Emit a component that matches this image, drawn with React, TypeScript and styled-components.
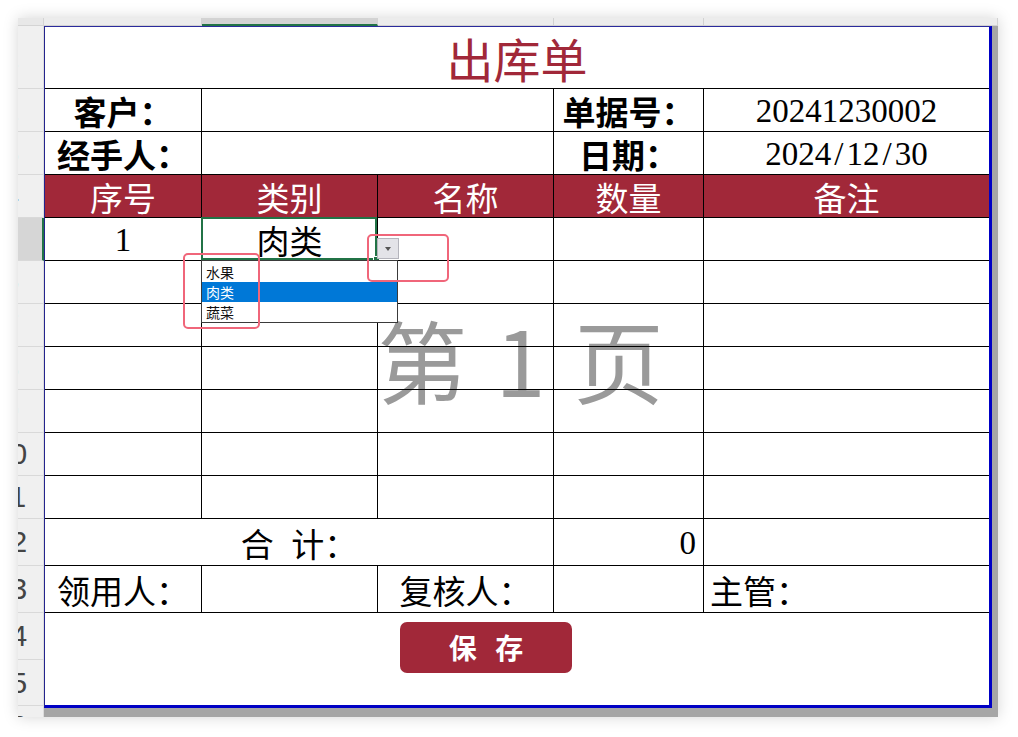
import React from "react";
import styled, { createGlobalStyle } from "styled-components";

const RED = "#a12839";
const CJK = `"Noto Sans CJK SC", sans-serif`;
const SERIF = `"Liberation Serif", "Noto Sans CJK SC", serif`;

const GlobalStyle = createGlobalStyle`
  html, body { margin: 0; padding: 0; background: #ffffff; }
  body { width: 1018px; height: 737px; overflow: hidden; font-family: ${CJK}; }
`;

const Stage = styled.div`
  padding: 18px 0 0 18px;
`;

const Window = styled.div`
  width: 980px;
  height: 699px;
  display: grid;
  grid-template-columns: 26px 954px;
  grid-template-rows: 8px 691px;
  background: #f0f0f0;
  box-shadow: 0 0 14px rgba(0, 0, 0, 0.17);
  overflow: hidden;
`;

const Corner = styled.div`
  box-sizing: border-box;
  background: #e8e8e8;
  border-right: 1px solid #d4d4d4;
  border-bottom: 1px solid #d4d4d4;
`;

const ColHeaders = styled.div`
  display: grid;
  grid-template-columns: 158px 176px 176px 150px 1fr;
`;

const ColHead = styled.div<{ $active?: boolean }>`
  box-sizing: border-box;
  border-right: 1px solid #d2d2d2;
  border-bottom: ${(p) => (p.$active ? "2px solid #217346" : "1px solid #d2d2d2")};
  background: ${(p) => (p.$active ? "#d3d3d3" : "#ececec")};
`;

const RowHeaders = styled.div`
  display: flex;
  flex-direction: column;
  overflow: hidden;
  background: #f0f0f0;
`;

const RowHead = styled.div<{ $h: number; $active?: boolean }>`
  flex: none;
  box-sizing: border-box;
  width: 66px;
  margin-left: -40px;
  height: ${(p) => p.$h}px;
  display: flex;
  align-items: center;
  justify-content: center;
  font-family: "Liberation Sans", sans-serif;
  font-size: 30px;
  line-height: 1;
  color: #444;
  background: ${(p) => (p.$active ? "#d6d6d6" : "#f0f0f0")};
  border-bottom: 1px solid #d9d9d9;
  border-right: ${(p) => (p.$active ? "2px solid #217346" : "1px solid #dcdcdc")};
`;

const SheetArea = styled.div`
  background: #a6a6a6;
`;

const Page = styled.div`
  position: relative;
  box-sizing: border-box;
  width: 948px;
  height: 682px;
  background: #ffffff;
  border-left: 1px solid #24248e;
  border-top: 1px solid #2b2b9c;
  border-right: 3px solid #0000c4;
  border-bottom: 3px solid #0000c4;
`;

const Watermark = styled.div`
  position: absolute;
  z-index: 0;
  left: 0;
  right: 0;
  top: 286px;
  padding-left: 7px;
  text-align: center;
  font-family: ${CJK};
  font-size: 90px;
  line-height: 90px;
  word-spacing: 8px;
  color: #9a9a9a;
  pointer-events: none;
`;

const Sheet = styled.div`
  position: relative;
  z-index: 1;
  display: grid;
  grid-template-columns: 157px 176px 176px 150px 285px;
  grid-template-rows: 62px repeat(10, 43px) 47px 47px 92px;
`;

type CellProps = {
  $span?: number;
  $last?: boolean;
  $noBottom?: boolean;
  $align?: "left" | "center" | "right";
  $pad?: number;
  $bold?: boolean;
  $serif?: boolean;
  $head?: boolean;
  $spacing?: number;
};

const Cell = styled.div<CellProps>`
  box-sizing: border-box;
  grid-column: span ${(p) => p.$span ?? 1};
  border-right: ${(p) => (p.$last ? "none" : "1px solid #000")};
  border-bottom: ${(p) => (p.$noBottom ? "none" : "1px solid #000")};
  display: flex;
  align-items: center;
  justify-content: ${(p) =>
    p.$align === "left" ? "flex-start" : p.$align === "right" ? "flex-end" : "center"};
  padding: 3px ${(p) => (p.$align === "right" ? p.$pad ?? 0 : 0)}px 0
    ${(p) => (p.$align === "left" ? p.$pad ?? 0 : 0)}px;
  font-family: ${(p) => (p.$serif ? SERIF : CJK)};
  font-size: 33px;
  line-height: 1;
  font-weight: ${(p) => (p.$bold ? 600 : 400)};
  word-spacing: ${(p) => p.$spacing ?? 0}px;
  color: ${(p) => (p.$head ? "#ffffff" : "#000000")};
  background: ${(p) => (p.$head ? RED : "transparent")};
  white-space: nowrap;
`;

const TitleCell = styled(Cell)`
  font-size: 47px;
  color: ${RED};
  padding-top: 0;
`;

const ActiveCell = styled(Cell)`
  position: relative;
`;

const Slash = styled.span`
  margin: 0 3px;
`;

const SelectionBox = styled.div`
  position: absolute;
  left: -1px;
  top: -1px;
  right: 0;
  bottom: 0;
  border: 2px solid #217346;
  pointer-events: none;
`;

const FillHandle = styled.div`
  position: absolute;
  right: -3px;
  bottom: -3px;
  width: 5px;
  height: 5px;
  background: #217346;
  border: 1px solid #fff;
`;

const ArrowButton = styled.div`
  position: absolute;
  left: 175px;
  top: 20px;
  width: 22px;
  height: 21px;
  box-sizing: border-box;
  background: #e3e3e8;
  border: 1px solid #b4b4bc;
  display: flex;
  align-items: center;
  justify-content: center;
`;

const Caret = styled.span`
  width: 0;
  height: 0;
  border-left: 3.5px solid transparent;
  border-right: 3.5px solid transparent;
  border-top: 4px solid #555;
`;

const DropList = styled.div`
  position: absolute;
  left: -1px;
  top: 42px;
  width: 197px;
  box-sizing: border-box;
  background: #fff;
  border: 1px solid #3a3a3a;
  padding: 1px 0 0;
  z-index: 2;
`;

const DropItem = styled.div<{ $selected?: boolean }>`
  height: 20px;
  line-height: 20px;
  padding-left: 4px;
  font-family: ${CJK};
  font-size: 14px;
  color: ${(p) => (p.$selected ? "#fff" : "#111")};
  background: ${(p) => (p.$selected ? "#0078d7" : "transparent")};
`;

const Mark = styled.div<{ $l: number; $t: number; $w: number; $h: number }>`
  position: absolute;
  z-index: 3;
  left: ${(p) => p.$l}px;
  top: ${(p) => p.$t}px;
  width: ${(p) => p.$w}px;
  height: ${(p) => p.$h}px;
  box-sizing: border-box;
  border: 2px solid #f0667a;
  border-radius: 5px;
  pointer-events: none;
`;

const ButtonCell = styled(Cell)`
  align-items: flex-start;
  justify-content: flex-start;
  padding: 9px 0 0 355px;
`;

const SaveButton = styled.button`
  width: 172px;
  height: 51px;
  border: none;
  border-radius: 7px;
  background: ${RED};
  color: #fff;
  font-family: ${CJK};
  font-size: 28px;
  line-height: 1;
  font-weight: 700;
  word-spacing: 12px;
  padding: 0 0 2px;
  cursor: pointer;
`;

const rowHeights = [63, 43, 43, 43, 43, 43, 43, 43, 43, 43, 43, 47, 47, 47, 46, 40];

const headers = ["序号", "类别", "名称", "数量", "备注"];

export default function App() {
  return (
    <>
      <GlobalStyle />
      <Stage>
        <Window>
          <Corner />
          <ColHeaders>
            <ColHead />
            <ColHead $active />
            <ColHead />
            <ColHead />
            <ColHead />
          </ColHeaders>
          <RowHeaders>
            {rowHeights.map((h, i) => (
              <RowHead key={i} $h={h} $active={i === 4}>
                {i + 1}
              </RowHead>
            ))}
          </RowHeaders>
          <SheetArea>
            <Page>
              <Watermark>第 1 页</Watermark>
              <Sheet>
                <TitleCell $span={5} $last>
                  出库单
                </TitleCell>

                <Cell $bold>客户：</Cell>
                <Cell $span={2} />
                <Cell $bold>单据号：</Cell>
                <Cell $last $serif>
                  20241230002
                </Cell>

                <Cell $bold>经手人：</Cell>
                <Cell $span={2} />
                <Cell $bold>日期：</Cell>
                <Cell $last $serif>
                  2024<Slash>/</Slash>12<Slash>/</Slash>30
                </Cell>

                {headers.map((h, i) => (
                  <Cell key={h} $head $last={i === 4}>
                    {h}
                  </Cell>
                ))}

                <Cell $serif>1</Cell>
                <ActiveCell>
                  肉类
                  <SelectionBox />
                  <FillHandle />
                  <ArrowButton>
                    <Caret />
                  </ArrowButton>
                  <DropList>
                    <DropItem>水果</DropItem>
                    <DropItem $selected>肉类</DropItem>
                    <DropItem>蔬菜</DropItem>
                  </DropList>
                  <Mark $l={-19} $t={35} $w={77} $h={76} />
                  <Mark $l={165} $t={16} $w={82} $h={48} />
                </ActiveCell>
                <Cell />
                <Cell />
                <Cell $last />

                {Array.from({ length: 6 }).map((_, r) => (
                  <React.Fragment key={r}>
                    <Cell />
                    <Cell />
                    <Cell />
                    <Cell />
                    <Cell $last />
                  </React.Fragment>
                ))}

                <Cell $span={3} $spacing={10}>
                  合 计：
                </Cell>
                <Cell $serif $align="right" $pad={7}>
                  0
                </Cell>
                <Cell $last />

                <Cell>领用人：</Cell>
                <Cell />
                <Cell>复核人：</Cell>
                <Cell />
                <Cell $last $align="left" $pad={6}>
                  主管：
                </Cell>

                <ButtonCell $span={5} $last $noBottom>
                  <SaveButton>保 存</SaveButton>
                </ButtonCell>
              </Sheet>
            </Page>
          </SheetArea>
        </Window>
      </Stage>
    </>
  );
}
